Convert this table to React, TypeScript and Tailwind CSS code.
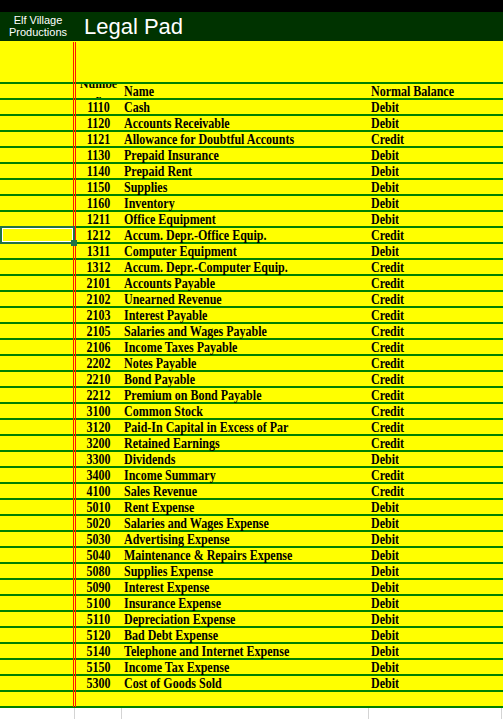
import React from 'react'

const accounts: Array<[string, string, string]> = [
  ['1110', 'Cash', 'Debit'],
  ['1120', 'Accounts Receivable', 'Debit'],
  ['1121', 'Allowance for Doubtful Accounts', 'Credit'],
  ['1130', 'Prepaid Insurance', 'Debit'],
  ['1140', 'Prepaid Rent', 'Debit'],
  ['1150', 'Supplies', 'Debit'],
  ['1160', 'Inventory', 'Debit'],
  ['1211', 'Office Equipment', 'Debit'],
  ['1212', 'Accum. Depr.-Office Equip.', 'Credit'],
  ['1311', 'Computer Equipment', 'Debit'],
  ['1312', 'Accum. Depr.-Computer Equip.', 'Credit'],
  ['2101', 'Accounts Payable', 'Credit'],
  ['2102', 'Unearned Revenue', 'Credit'],
  ['2103', 'Interest Payable', 'Credit'],
  ['2105', 'Salaries and Wages Payable', 'Credit'],
  ['2106', 'Income Taxes Payable', 'Credit'],
  ['2202', 'Notes Payable', 'Credit'],
  ['2210', 'Bond Payable', 'Credit'],
  ['2212', 'Premium on Bond Payable', 'Credit'],
  ['3100', 'Common Stock', 'Credit'],
  ['3120', 'Paid-In Capital in Excess of Par', 'Credit'],
  ['3200', 'Retained Earnings', 'Credit'],
  ['3300', 'Dividends', 'Debit'],
  ['3400', 'Income Summary', 'Credit'],
  ['4100', 'Sales Revenue', 'Credit'],
  ['5010', 'Rent Expense', 'Debit'],
  ['5020', 'Salaries and Wages Expense', 'Debit'],
  ['5030', 'Advertising Expense', 'Debit'],
  ['5040', 'Maintenance & Repairs Expense', 'Debit'],
  ['5080', 'Supplies Expense', 'Debit'],
  ['5090', 'Interest Expense', 'Debit'],
  ['5100', 'Insurance Expense', 'Debit'],
  ['5110', 'Depreciation Expense', 'Debit'],
  ['5120', 'Bad Debt Expense', 'Debit'],
  ['5140', 'Telephone and Internet Expense', 'Debit'],
  ['5150', 'Income Tax Expense', 'Debit'],
  ['5300', 'Cost of Goods Sold', 'Debit'],
]

// cell text, stretched a bit vertically like the spreadsheet render
function Txt({ children }: { children?: React.ReactNode }) {
  return (
    <span className="inline-block whitespace-nowrap leading-[12px] origin-bottom scale-y-[1.23]">
      {children}
    </span>
  )
}

function Row({ num, name, bal }: { num?: string; name?: string; bal?: string }) {
  return (
    <div className="flex h-[16px] border-b-2 border-[#008000]">
      <div className="w-[76px] shrink-0" />
      <div className="w-[45px] shrink-0 flex items-end justify-center">
        <Txt>{num}</Txt>
      </div>
      <div className="w-[247px] shrink-0 flex items-end pl-[3px]">
        <Txt>{name}</Txt>
      </div>
      <div className="flex-1 flex items-end pl-[3px]">
        <Txt>{bal}</Txt>
      </div>
    </div>
  )
}

export default function App() {
  return (
    <div className="w-[503px] h-[719px] overflow-hidden bg-white">
      {/* Title bar */}
      <div className="h-[12px] bg-black" />
      <div className="h-[29px] bg-[#003300] flex text-white font-['Liberation_Sans',Arial,sans-serif]">
        <div className="w-[76px] shrink-0 pt-[2px] text-center text-[11px] leading-[12px]">
          Elf Village
          <br />
          Productions
        </div>
        <div className="pl-[8px] pt-[4px] text-[22px] leading-[22px]">Legal Pad</div>
      </div>

      {/* Sheet */}
      <div className="relative bg-[#ffff00] text-[12px] font-bold text-black font-['Liberation_Serif','Times_New_Roman',serif]">
        <div className="h-[43px] border-b-2 border-[#008000]" />

        {/* header row */}
        <div className="flex h-[16px] border-b-2 border-[#008000]">
          <div className="w-[76px] shrink-0" />
          <div className="relative w-[45px] shrink-0 overflow-hidden">
            <div className="absolute left-0 right-0 top-[-7px] text-center leading-[15px]">
              Numbe
              <br />r
            </div>
          </div>
          <div className="w-[247px] shrink-0 flex items-end pl-[3px]">
            <Txt>Name</Txt>
          </div>
          <div className="flex-1 flex items-end pl-[3px]">
            <Txt>Normal Balance</Txt>
          </div>
        </div>

        {accounts.map(([num, name, bal]) => (
          <Row key={num} num={num} name={name} bal={bal} />
        ))}
        <Row />

        {/* double red rule */}
        <div className="absolute left-[73px] top-[1px] h-[665px] w-[3px] border-x border-[#ff1a00]" />

        {/* active cell */}
        <div className="absolute left-0 top-[185px] w-[75px] h-[18px] border-2 border-[#217346] shadow-[inset_0_0_0_1px_#fff]" />
        <div className="absolute left-[71px] top-[199px] w-[6px] h-[6px] bg-[#217346]" />
      </div>

      {/* empty grid below */}
      <div className="flex h-[11px]">
        <div className="w-[75px] border-r border-[#d4d4d4]" />
        <div className="w-[47px] border-r border-[#d4d4d4]" />
        <div className="w-[247px] border-r border-[#d4d4d4]" />
        <div className="w-[133px] border-r border-[#d4d4d4]" />
      </div>
    </div>
  )
}
